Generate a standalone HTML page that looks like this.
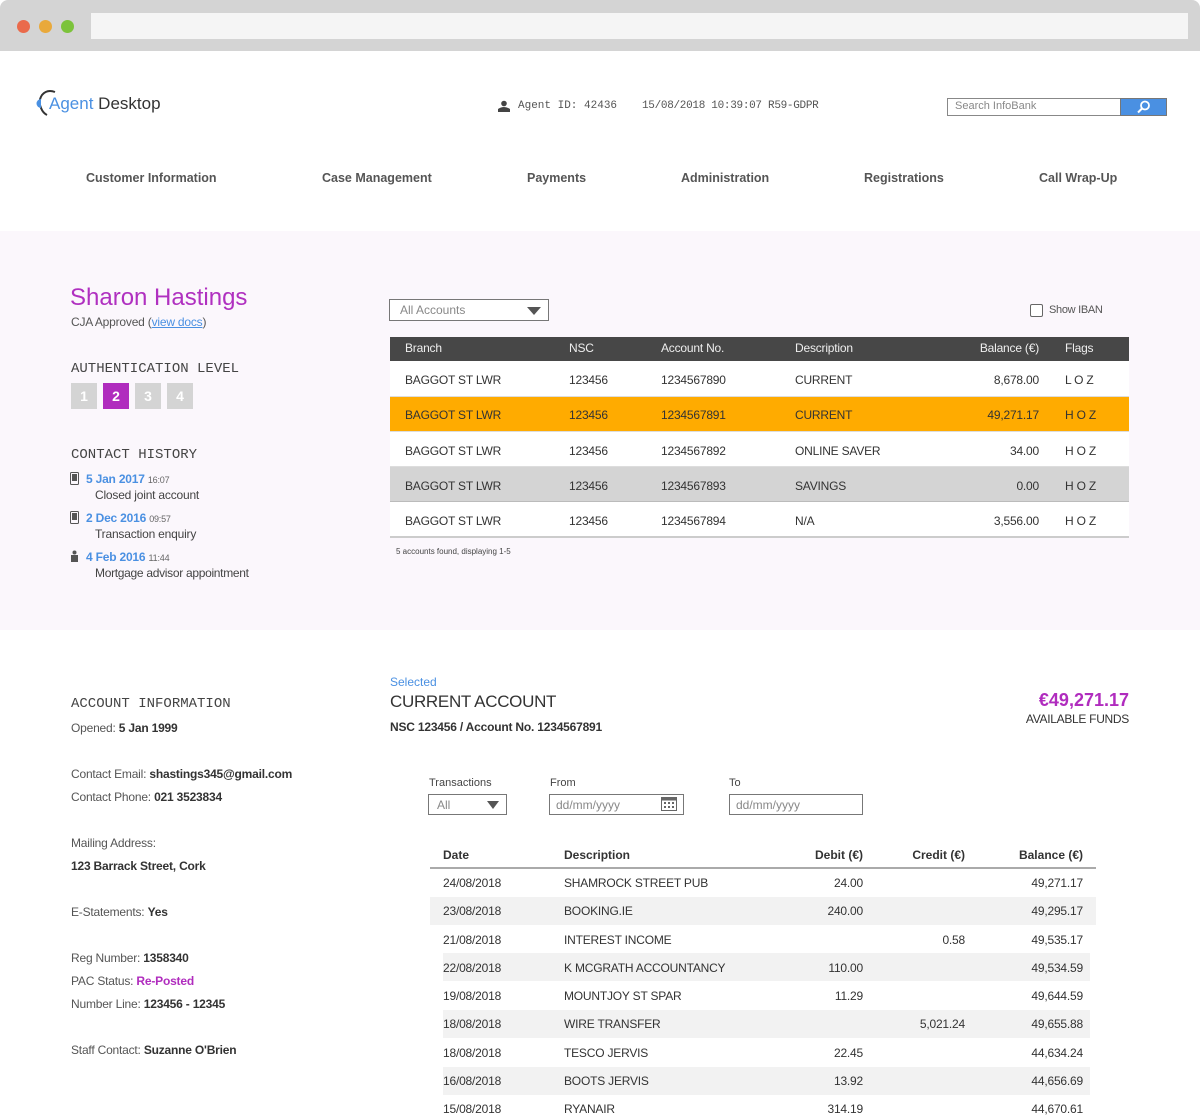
<!DOCTYPE html>
<html><head><meta charset="utf-8">
<style>
*{margin:0;padding:0;box-sizing:border-box}
body{width:1200px;height:1111px;overflow:hidden;background:#fff;font-family:"Liberation Sans",sans-serif;color:#333;position:relative}
.a{position:absolute;white-space:nowrap}
.mono{font-family:"Liberation Mono",monospace}
.nav{font-size:12.5px;font-weight:bold;color:#555;top:171px}
.th{color:#eee;font-size:12px;letter-spacing:-0.2px}
.td{font-size:12px;color:#333;letter-spacing:-0.2px}
.r{text-align:right}
.lbl{font-size:12px;color:#555;letter-spacing:-0.2px}
.lbl b{color:#333}
.h{font-family:"Liberation Mono",monospace;font-size:14px;color:#444;letter-spacing:0}
</style></head><body>
<div class="a" style="left:0;top:0;width:1200px;height:51px;background:#d4d4d4;border-radius:8px 8px 0 0"></div>
<div class="a" style="left:17px;top:20px;width:13px;height:13px;border-radius:50%;background:#ea6a4b"></div>
<div class="a" style="left:39px;top:20px;width:13px;height:13px;border-radius:50%;background:#e9a93b"></div>
<div class="a" style="left:61px;top:20px;width:13px;height:13px;border-radius:50%;background:#7cc33b"></div>
<div class="a" style="left:91px;top:13px;width:1097px;height:26px;background:#f5f5f5"></div>

<svg class="a" style="left:35px;top:88px" width="24" height="30" viewBox="0 0 24 30"><path d="M20 4 Q12 1 7 7 Q3 13 6 20 Q8 25 12 27" fill="none" stroke="#333" stroke-width="2"/><path d="M6 11 A4.5 4.5 0 0 0 6 20 Z" fill="#4a90e2"/></svg>
<div class="a" style="left:49px;top:94px;font-size:17px"><span style="color:#4a90e2">Agent</span> <span style="color:#333">Desktop</span></div>
<svg class="a" style="left:498px;top:100px" width="12" height="12" viewBox="0 0 12 12"><circle cx="6" cy="3.5" r="2.8" fill="#444"/><path d="M0 12 V9 Q6 5 12 9 V12Z" fill="#444"/></svg>
<div class="a mono" style="left:518px;top:100px;font-size:11px;color:#555">Agent ID: 42436</div>
<div class="a mono" style="left:642px;top:100px;font-size:11px;color:#555;letter-spacing:-0.3px">15/08/2018 10:39:07 R59-GDPR</div>
<div class="a" style="left:947px;top:98px;width:220px;height:18px;border:1px solid #888;background:#fff"></div>
<div class="a" style="left:955px;top:100px;font-size:11px;color:#888">Search InfoBank</div>
<div class="a" style="left:1120px;top:98px;width:47px;height:18px;background:#4a90e2;border:1px solid #777"></div>
<svg class="a" style="left:1136px;top:100px" width="15" height="14" viewBox="0 0 15 14"><circle cx="9" cy="5.5" r="4" fill="none" stroke="#fff" stroke-width="1.8"/><path d="M6 8.5 L2 12.5" stroke="#fff" stroke-width="2"/></svg>

<div class="a nav" style="left:86px">Customer Information</div>
<div class="a nav" style="left:322px">Case Management</div>
<div class="a nav" style="left:527px">Payments</div>
<div class="a nav" style="left:681px">Administration</div>
<div class="a nav" style="left:864px">Registrations</div>
<div class="a nav" style="left:1039px">Call Wrap-Up</div>

<div class="a" style="left:0;top:231px;width:1200px;height:399px;background:#fbf7fc"></div>
<div class="a" style="left:70px;top:284px;font-size:24px;color:#b030c0">Sharon Hastings</div>
<div class="a" style="left:71px;top:315px;font-size:12px;color:#555;letter-spacing:-0.2px">CJA Approved (<span style="color:#4a90e2;text-decoration:underline">view docs</span>)</div>
<div class="a h" style="left:71px;top:361px">AUTHENTICATION LEVEL</div>
<div class="a" style="left:71px;top:383px;width:26px;height:26px;background:#d4d4d4;color:#fff;font-size:14px;font-weight:bold;text-align:center;line-height:26px">1</div>
<div class="a" style="left:103px;top:383px;width:26px;height:26px;background:#b02cbe;color:#fff;font-size:14px;font-weight:bold;text-align:center;line-height:26px">2</div>
<div class="a" style="left:135px;top:383px;width:26px;height:26px;background:#d4d4d4;color:#fff;font-size:14px;font-weight:bold;text-align:center;line-height:26px">3</div>
<div class="a" style="left:167px;top:383px;width:26px;height:26px;background:#d4d4d4;color:#fff;font-size:14px;font-weight:bold;text-align:center;line-height:26px">4</div>
<div class="a h" style="left:71px;top:447px">CONTACT HISTORY</div>
<svg class="a" style="left:70px;top:472px" width="9" height="13"><rect x="0.5" y="0.5" width="8" height="12" rx="1" fill="none" stroke="#555"/><rect x="2" y="2" width="5" height="7" fill="#555"/></svg>
<div class="a" style="left:86px;top:472px;font-size:12px;color:#4a90e2;font-weight:bold;letter-spacing:-0.2px">5 Jan 2017 <span style="font-size:9px;color:#666;font-weight:normal">16:07</span></div>
<div class="a" style="left:95px;top:488px;font-size:12px;color:#444;letter-spacing:-0.2px">Closed joint account</div>
<svg class="a" style="left:70px;top:511px" width="9" height="13"><rect x="0.5" y="0.5" width="8" height="12" rx="1" fill="none" stroke="#555"/><rect x="2" y="2" width="5" height="7" fill="#555"/></svg>
<div class="a" style="left:86px;top:511px;font-size:12px;color:#4a90e2;font-weight:bold;letter-spacing:-0.2px">2 Dec 2016 <span style="font-size:9px;color:#666;font-weight:normal">09:57</span></div>
<div class="a" style="left:95px;top:527px;font-size:12px;color:#444;letter-spacing:-0.2px">Transaction enquiry</div>
<svg class="a" style="left:70px;top:550px" width="9" height="12"><circle cx="4.5" cy="2.5" r="2" fill="#555"/><rect x="1" y="5" width="7" height="7" fill="#555"/></svg>
<div class="a" style="left:86px;top:550px;font-size:12px;color:#4a90e2;font-weight:bold;letter-spacing:-0.2px">4 Feb 2016 <span style="font-size:9px;color:#666;font-weight:normal">11:44</span></div>
<div class="a" style="left:95px;top:566px;font-size:12px;color:#444;letter-spacing:-0.3px">Mortgage advisor appointment</div>

<div class="a" style="left:389px;top:299px;width:160px;height:22px;border:1px solid #777;background:#fff"></div>
<div class="a" style="left:400px;top:303px;font-size:12px;color:#888">All Accounts</div>
<svg class="a" style="left:527px;top:307px" width="14" height="8"><path d="M0 0 H14 L7 8Z" fill="#555"/></svg>
<div class="a" style="left:1030px;top:304px;width:13px;height:13px;border:1px solid #666;border-radius:2px;background:#fff"></div>
<div class="a" style="left:1049px;top:304px;font-size:11px;color:#555;letter-spacing:-0.3px">Show IBAN</div>

<div class="a" style="left:390px;top:337px;width:739px;height:24px;background:#474747"></div>
<div class="a th" style="left:405px;top:341px">Branch</div>
<div class="a th" style="left:569px;top:341px">NSC</div>
<div class="a th" style="left:661px;top:341px">Account No.</div>
<div class="a th" style="left:795px;top:341px">Description</div>
<div class="a th r" style="left:939px;width:100px;top:341px">Balance (€)</div>
<div class="a th" style="left:1065px;top:341px">Flags</div>

<div class="a" style="left:390px;top:361px;width:739px;height:36px;background:#fff;border-bottom:1px solid #ddd"></div>
<div class="a" style="left:390px;top:397px;width:739px;height:35px;background:#ffab00;border-bottom:1px solid #ddd"></div>
<div class="a" style="left:390px;top:432px;width:739px;height:35px;background:#fff;border-bottom:1px solid #ddd"></div>
<div class="a" style="left:390px;top:467px;width:739px;height:35px;background:#d4d4d4;border-bottom:1px solid #bbb"></div>
<div class="a" style="left:390px;top:502px;width:739px;height:36px;background:#fff;border-bottom:2px solid #ccc"></div>

<div class="a td" style="left:405px;top:373px">BAGGOT ST LWR</div><div class="a td" style="left:569px;top:373px">123456</div><div class="a td" style="left:661px;top:373px">1234567890</div><div class="a td" style="left:795px;top:373px">CURRENT</div><div class="a td r" style="left:939px;width:100px;top:373px">8,678.00</div><div class="a td" style="left:1065px;top:373px">L O Z</div>
<div class="a td" style="left:405px;top:408px">BAGGOT ST LWR</div><div class="a td" style="left:569px;top:408px">123456</div><div class="a td" style="left:661px;top:408px">1234567891</div><div class="a td" style="left:795px;top:408px">CURRENT</div><div class="a td r" style="left:939px;width:100px;top:408px">49,271.17</div><div class="a td" style="left:1065px;top:408px">H O Z</div>
<div class="a td" style="left:405px;top:444px">BAGGOT ST LWR</div><div class="a td" style="left:569px;top:444px">123456</div><div class="a td" style="left:661px;top:444px">1234567892</div><div class="a td" style="left:795px;top:444px">ONLINE SAVER</div><div class="a td r" style="left:939px;width:100px;top:444px">34.00</div><div class="a td" style="left:1065px;top:444px">H O Z</div>
<div class="a td" style="left:405px;top:479px">BAGGOT ST LWR</div><div class="a td" style="left:569px;top:479px">123456</div><div class="a td" style="left:661px;top:479px">1234567893</div><div class="a td" style="left:795px;top:479px">SAVINGS</div><div class="a td r" style="left:939px;width:100px;top:479px">0.00</div><div class="a td" style="left:1065px;top:479px">H O Z</div>
<div class="a td" style="left:405px;top:514px">BAGGOT ST LWR</div><div class="a td" style="left:569px;top:514px">123456</div><div class="a td" style="left:661px;top:514px">1234567894</div><div class="a td" style="left:795px;top:514px">N/A</div><div class="a td r" style="left:939px;width:100px;top:514px">3,556.00</div><div class="a td" style="left:1065px;top:514px">H O Z</div>
<div class="a" style="left:396px;top:547px;font-size:8px;color:#444">5 accounts found, displaying 1-5</div>

<div class="a h" style="left:71px;top:696px">ACCOUNT INFORMATION</div>
<div class="a lbl" style="left:71px;top:721px">Opened: <b>5 Jan 1999</b></div>
<div class="a lbl" style="left:71px;top:767px">Contact Email: <b>shastings345@gmail.com</b></div>
<div class="a lbl" style="left:71px;top:790px">Contact Phone: <b>021 3523834</b></div>
<div class="a lbl" style="left:71px;top:836px">Mailing Address:</div>
<div class="a lbl" style="left:71px;top:859px"><b>123 Barrack Street, Cork</b></div>
<div class="a lbl" style="left:71px;top:905px">E-Statements: <b>Yes</b></div>
<div class="a lbl" style="left:71px;top:951px">Reg Number: <b>1358340</b></div>
<div class="a lbl" style="left:71px;top:974px">PAC Status: <b style="color:#b02cbe">Re-Posted</b></div>
<div class="a lbl" style="left:71px;top:997px">Number Line: <b>123456 - 12345</b></div>
<div class="a lbl" style="left:71px;top:1043px">Staff Contact: <b>Suzanne O'Brien</b></div>

<div class="a" style="left:390px;top:675px;font-size:12px;color:#4a90e2">Selected</div>
<div class="a" style="left:390px;top:692px;font-size:17px;color:#333;letter-spacing:-0.3px">CURRENT ACCOUNT</div>
<div class="a" style="left:390px;top:720px;font-size:12px;font-weight:bold;color:#333;letter-spacing:-0.2px">NSC 123456 / Account No. 1234567891</div>
<div class="a r" style="left:929px;width:200px;top:690px;font-size:18px;font-weight:bold;color:#b02cbe">€49,271.17</div>
<div class="a r" style="left:929px;width:200px;top:712px;font-size:12px;color:#333;letter-spacing:-0.3px">AVAILABLE FUNDS</div>

<div class="a" style="left:429px;top:777px;font-size:11px;color:#444">Transactions</div>
<div class="a" style="left:550px;top:777px;font-size:11px;color:#444">From</div>
<div class="a" style="left:729px;top:777px;font-size:11px;color:#444">To</div>
<div class="a" style="left:428px;top:794px;width:79px;height:21px;border:1px solid #777;background:#fff"></div>
<div class="a" style="left:437px;top:798px;font-size:12px;color:#888">All</div>
<svg class="a" style="left:487px;top:801px" width="12" height="8"><path d="M0 0 H12 L6 8Z" fill="#555"/></svg>
<div class="a" style="left:549px;top:794px;width:135px;height:21px;border:1px solid #777;background:#fff"></div>
<div class="a" style="left:556px;top:798px;font-size:12px;color:#888">dd/mm/yyyy</div>
<svg class="a" style="left:661px;top:797px" width="16" height="14"><rect x="0.5" y="0.5" width="15" height="13" fill="none" stroke="#666"/><rect x="0.5" y="0.5" width="15" height="3" fill="#666"/><g fill="#666"><rect x="3" y="5" width="2" height="2"/><rect x="7" y="5" width="2" height="2"/><rect x="11" y="5" width="2" height="2"/><rect x="3" y="9" width="2" height="2"/><rect x="7" y="9" width="2" height="2"/><rect x="11" y="9" width="2" height="2"/></g></svg>
<div class="a" style="left:729px;top:794px;width:134px;height:21px;border:1px solid #777;background:#fff"></div>
<div class="a" style="left:736px;top:798px;font-size:12px;color:#888">dd/mm/yyyy</div>

<div class="a" style="left:443px;top:848px;font-size:12px;font-weight:bold;color:#333">Date</div>
<div class="a" style="left:564px;top:848px;font-size:12px;font-weight:bold;color:#333">Description</div>
<div class="a r" style="left:763px;width:100px;top:848px;font-size:12px;font-weight:bold;color:#333">Debit (€)</div>
<div class="a r" style="left:865px;width:100px;top:848px;font-size:12px;font-weight:bold;color:#333">Credit (€)</div>
<div class="a r" style="left:983px;width:100px;top:848px;font-size:12px;font-weight:bold;color:#333">Balance (€)</div>
<div class="a" style="left:430px;top:867px;width:666px;height:2px;background:#aaa"></div>

<div class="a" style="left:430px;top:897px;width:666px;height:28px;background:#f2f2f2"></div>
<div class="a" style="left:443px;top:953px;width:647px;height:28px;background:#f2f2f2"></div>
<div class="a" style="left:443px;top:1010px;width:647px;height:28px;background:#f2f2f2"></div>
<div class="a" style="left:443px;top:1067px;width:647px;height:28px;background:#f2f2f2"></div>

<div class="a td" style="left:443px;top:876px">24/08/2018</div><div class="a td" style="left:564px;top:876px">SHAMROCK STREET PUB</div><div class="a td r" style="left:763px;width:100px;top:876px">24.00</div><div class="a td r" style="left:983px;width:100px;top:876px">49,271.17</div>
<div class="a td" style="left:443px;top:904px">23/08/2018</div><div class="a td" style="left:564px;top:904px">BOOKING.IE</div><div class="a td r" style="left:763px;width:100px;top:904px">240.00</div><div class="a td r" style="left:983px;width:100px;top:904px">49,295.17</div>
<div class="a td" style="left:443px;top:933px">21/08/2018</div><div class="a td" style="left:564px;top:933px">INTEREST INCOME</div><div class="a td r" style="left:865px;width:100px;top:933px">0.58</div><div class="a td r" style="left:983px;width:100px;top:933px">49,535.17</div>
<div class="a td" style="left:443px;top:961px">22/08/2018</div><div class="a td" style="left:564px;top:961px">K MCGRATH ACCOUNTANCY</div><div class="a td r" style="left:763px;width:100px;top:961px">110.00</div><div class="a td r" style="left:983px;width:100px;top:961px">49,534.59</div>
<div class="a td" style="left:443px;top:989px">19/08/2018</div><div class="a td" style="left:564px;top:989px">MOUNTJOY ST SPAR</div><div class="a td r" style="left:763px;width:100px;top:989px">11.29</div><div class="a td r" style="left:983px;width:100px;top:989px">49,644.59</div>
<div class="a td" style="left:443px;top:1017px">18/08/2018</div><div class="a td" style="left:564px;top:1017px">WIRE TRANSFER</div><div class="a td r" style="left:865px;width:100px;top:1017px">5,021.24</div><div class="a td r" style="left:983px;width:100px;top:1017px">49,655.88</div>
<div class="a td" style="left:443px;top:1046px">18/08/2018</div><div class="a td" style="left:564px;top:1046px">TESCO JERVIS</div><div class="a td r" style="left:763px;width:100px;top:1046px">22.45</div><div class="a td r" style="left:983px;width:100px;top:1046px">44,634.24</div>
<div class="a td" style="left:443px;top:1074px">16/08/2018</div><div class="a td" style="left:564px;top:1074px">BOOTS JERVIS</div><div class="a td r" style="left:763px;width:100px;top:1074px">13.92</div><div class="a td r" style="left:983px;width:100px;top:1074px">44,656.69</div>
<div class="a td" style="left:443px;top:1102px">15/08/2018</div><div class="a td" style="left:564px;top:1102px">RYANAIR</div><div class="a td r" style="left:763px;width:100px;top:1102px">314.19</div><div class="a td r" style="left:983px;width:100px;top:1102px">44,670.61</div>
</body></html>
